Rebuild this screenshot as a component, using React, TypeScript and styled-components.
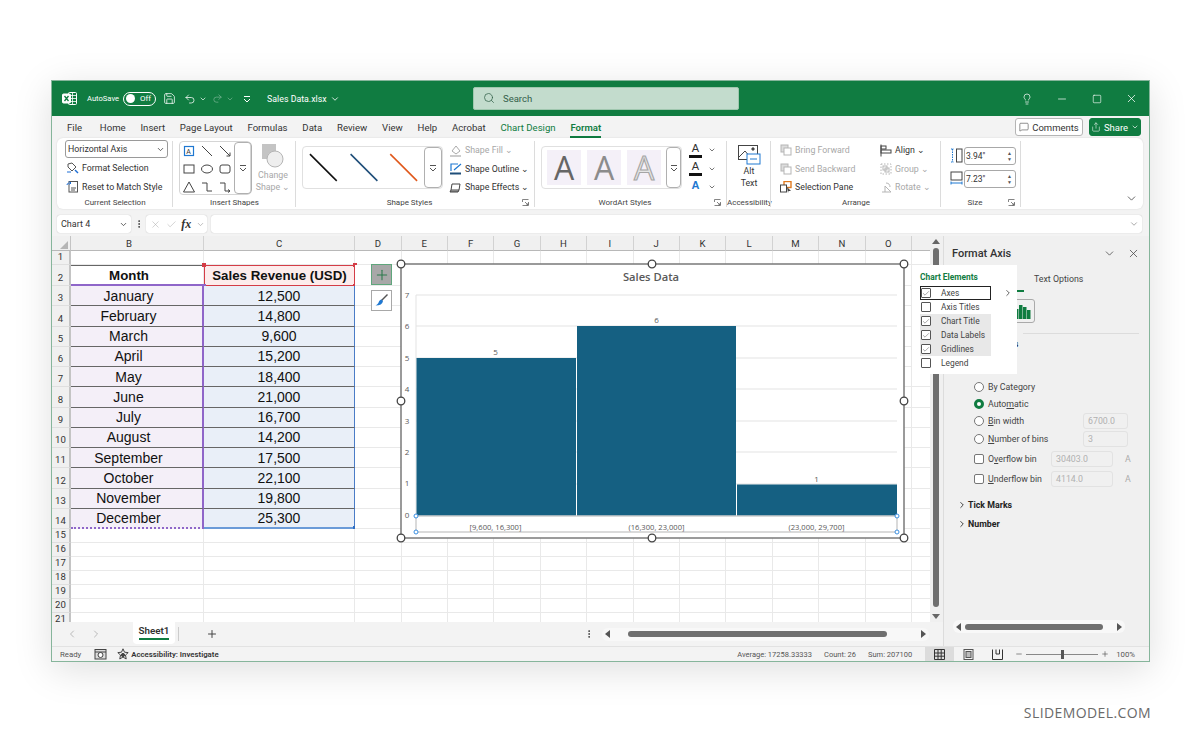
import React from 'react'
import styled, { createGlobalStyle } from 'styled-components'
import {
  Save, Undo2, Redo2, ChevronDown, ChevronRight, ChevronLeft, Search, Lightbulb, Minus, Square, X, Check,
  MessageSquare, Share, Plus, EllipsisVertical,
} from 'lucide-react'

const GlobalStyle = createGlobalStyle`
  html, body { margin: 0; padding: 0; background: #fff; }
  body { font-family: Roboto, "Open Sans", sans-serif; color: #333; }
  * { box-sizing: border-box; }
  #root { width: 1200px; height: 743px; overflow: hidden; }
`

const green = '#107c41'

const Page = styled.div`
  display: flex;
  flex-direction: column;
  width: 1200px;
  height: 743px;
  padding: 80px 49px 0 51px;
`

const Window = styled.div`
  display: flex;
  flex-direction: column;
  width: 1099px;
  height: 582px;
  flex-shrink: 0;
  border: 1px solid #86b59b;
  background: #f3f3f3;
  box-shadow: 0 8px 36px rgba(0, 0, 0, 0.13);
`

const Watermark = styled.div`
  margin-top: 42px;
  text-align: right;
  font-family: "Open Sans", sans-serif;
  font-size: 14px;
  line-height: 18px;
  letter-spacing: 0.4px;
  color: #6a6a6a;
`

/* title bar */
const TitleBar = styled.div`
  display: flex;
  align-items: center;
  height: 35px;
  flex-shrink: 0;
  background: ${green};
  color: #fff;
`

const TitleLeft = styled.div`
  display: flex;
  align-items: center;
  width: 421px;
  padding-left: 10px;
`

const TitleItem = styled.div<{ $ml?: number; $dim?: boolean }>`
  display: flex;
  align-items: center;
  margin-left: ${(p) => p.$ml ?? 0}px;
  opacity: ${(p) => (p.$dim ? 0.45 : 1)};
  font-size: 7.6px;
`

const FileName = styled(TitleItem)`
  font-size: 8.8px;
  gap: 3px;
`

const Toggle = styled.div`
  display: flex;
  align-items: center;
  justify-content: space-between;
  width: 33px;
  height: 14px;
  margin-left: 4px;
  padding: 0 4px 0 2px;
  border: 1px solid #fff;
  border-radius: 8px;
  font-size: 8px;
  &::before {
    content: '';
    width: 9px;
    height: 9px;
    border-radius: 50%;
    background: #fff;
  }
`

const SearchBox = styled.div`
  display: flex;
  align-items: center;
  gap: 8px;
  width: 266px;
  height: 23px;
  margin-top: -1px;
  padding-left: 9px;
  border: 1px solid #9fc7ae;
  border-radius: 2px;
  background: #c3dccd;
  color: #33604a;
  font-size: 9.5px;
`

const TitleRight = styled.div`
  display: flex;
  flex: 1;
  justify-content: flex-end;
`

const WindowButton = styled.div`
  display: flex;
  align-items: center;
  justify-content: center;
  width: 35px;
  height: 24px;
`

/* tabs */
const TabRow = styled.div`
  display: flex;
  align-items: center;
  height: 22px;
  flex-shrink: 0;
  padding: 0 8px 0 15px;
  gap: 14.8px;
`

const Tab = styled.div<{ $active?: boolean; $green?: boolean }>`
  position: relative;
  font-size: 9.6px;
  color: ${(p) => (p.$active || p.$green ? green : '#333')};
  font-weight: ${(p) => (p.$active ? 600 : 400)};
  &:first-child {
    margin-right: 3px;
  }
  &::after {
    content: '';
    display: ${(p) => (p.$active ? 'block' : 'none')};
    position: absolute;
    left: 0;
    right: 0;
    bottom: -5px;
    height: 2px;
    background: ${green};
  }
`

const TabActions = styled.div`
  display: flex;
  gap: 6px;
  margin-left: auto;
`

const CommentsButton = styled.div`
  display: flex;
  align-items: center;
  justify-content: center;
  gap: 3px;
  width: 68px;
  height: 18px;
  border: 1px solid #b5b5b5;
  border-radius: 3px;
  background: #fff;
  font-size: 9.5px;
`

const ShareButton = styled(CommentsButton)`
  width: 52px;
  border-color: ${green};
  background: ${green};
  color: #fff;
`

/* ribbon */
const Ribbon = styled.div`
  position: relative;
  display: flex;
  height: 71px;
  flex-shrink: 0;
  margin: 0 6px 0 5px;
  padding-top: 2px;
  border-radius: 6px;
  background: #fff;
  box-shadow: 0 0 2px rgba(0, 0, 0, 0.12);
`

const Group = styled.div<{ $w: number }>`
  position: relative;
  display: flex;
  flex-direction: column;
  width: ${(p) => p.$w}px;
  flex-shrink: 0;
  &::after {
    content: '';
    position: absolute;
    top: 1px;
    right: 0;
    bottom: 2px;
    width: 1px;
    background: #dcdcdc;
  }
`

const GroupBody = styled.div<{ $pl?: number }>`
  display: flex;
  height: 57px;
  padding-left: ${(p) => p.$pl ?? 0}px;
`

const GroupLabel = styled.div<{ $pr?: number }>`
  position: relative;
  height: 12px;
  padding-right: ${(p) => p.$pr ?? 0}px;
  line-height: 12px;
  text-align: center;
  font-size: 8px;
  color: #444;
`

const Launcher = styled.svg`
  position: absolute;
  right: 6px;
  top: 2px;
  width: 7px;
  height: 7px;
`

const CommandColumn = styled.div<{ $ml?: number; $w?: number; $pt?: number }>`
  display: flex;
  flex-direction: column;
  gap: 0;
  margin-left: ${(p) => p.$ml ?? 0}px;
  padding-top: ${(p) => p.$pt ?? 0}px;
  width: ${(p) => (p.$w ? `${p.$w}px` : 'auto')};
`

const Command = styled.div<{ $off?: boolean }>`
  display: flex;
  align-items: center;
  gap: 3px;
  height: 18.5px;
  white-space: nowrap;
  font-size: 8.8px;
  color: ${(p) => (p.$off ? '#a8a8a8' : '#333')};
`

const ComboBox = styled.div`
  display: flex;
  align-items: center;
  justify-content: space-between;
  width: 103px;
  height: 18px;
  padding: 0 2px 0 2px;
  margin-left: -1px;
  margin-bottom: 1px;
  border: 1px solid #9a9a9a;
  border-radius: 3px;
  font-size: 8.8px;
`

const ShapeGallery = styled.div`
  display: flex;
  width: 72px;
  height: 54px;
  margin: 1px 0 0 6px;
  border: 1px solid #d5d5d5;
  border-radius: 4px;
`

const ShapeGrid = styled.div`
  display: grid;
  grid-template-columns: repeat(3, 18px);
  grid-template-rows: repeat(3, 18px);
  justify-items: center;
  align-items: center;
`

const GalleryScroll = styled.div<{ $w: number }>`
  display: flex;
  align-items: center;
  justify-content: center;
  width: ${(p) => p.$w}px;
  margin-left: auto;
  border: 1px solid #b0b0b0;
  border-radius: 4px;
  flex-shrink: 0;
`

const ChangeShape = styled.div`
  display: flex;
  flex-direction: column;
  align-items: center;
  width: 40px;
  margin-left: 2px;
  padding-top: 3px;
  font-size: 8.8px;
  line-height: 12px;
  color: #a8a8a8;
  text-align: center;
`

const StyleGallery = styled.div<{ $w: number }>`
  display: flex;
  width: ${(p) => p.$w}px;
  height: 43px;
  margin: 6px 0 0 6px;
  border: 1px solid #e0e0e0;
  border-radius: 4px;
`

const WordTiles = styled.div`
  display: flex;
  gap: 6px;
  padding: 3px 0 0 5px;
`

const WordTile = styled.div<{ $tone: string; $outline?: boolean }>`
  display: flex;
  align-items: center;
  justify-content: center;
  width: 34px;
  height: 35px;
  background: #f4f0f8;
  font-family: "Open Sans", sans-serif;
  font-size: 32px;
  color: ${(p) => (p.$outline ? '#e6e6e6' : p.$tone)};
  -webkit-text-stroke: ${(p) => (p.$outline ? `1.1px ${p.$tone}` : '0')};
`

const FontRow = styled.div`
  display: flex;
  align-items: center;
  gap: 6px;
  height: 18.5px;
  color: #333;
`

const FontLetter = styled.div<{ $bar?: string; $color?: string }>`
  width: 13px;
  height: 15px;
  line-height: 11px;
  text-align: center;
  font-family: "Liberation Sans", sans-serif;
  font-size: 11px;
  color: ${(p) => p.$color ?? '#333'};
  font-weight: ${(p) => (p.$color ? 700 : 400)};
  border-bottom: 3px solid ${(p) => p.$bar ?? 'transparent'};
`

const AltText = styled.div`
  display: flex;
  flex-direction: column;
  align-items: center;
  width: 100%;
  padding-top: 5px;
  font-size: 8.8px;
  line-height: 12px;
`

const SizeRow = styled.div`
  display: flex;
  align-items: center;
  gap: 1px;
  height: 23px;
`

const SizeInput = styled.div`
  display: flex;
  align-items: center;
  justify-content: space-between;
  width: 52px;
  height: 18px;
  padding: 0 3px 0 1px;
  border: 1px solid #a8a8a8;
  border-radius: 3px;
  font-size: 8.5px;
`

const Spin = styled.div`
  display: flex;
  flex-direction: column;
  font-size: 5px;
  line-height: 6px;
  color: #555;
`

const RibbonCollapse = styled.div`
  position: absolute;
  right: 5px;
  top: 52px;
  color: #444;
`

/* formula bar */
const FormulaBar = styled.div`
  display: flex;
  align-items: flex-start;
  height: 27px;
  flex-shrink: 0;
  padding: 6px 7px 0 5px;
  color: #666;
`

const NameBox = styled.div`
  display: flex;
  align-items: center;
  justify-content: space-between;
  width: 74px;
  height: 18px;
  padding: 0 3px 0 4px;
  border-radius: 3px;
  background: #fff;
  box-shadow: 0 0 1px rgba(0, 0, 0, 0.3);
  color: #333;
  font-size: 9px;
`

const FormulaDots = styled.div`
  display: flex;
  align-items: center;
  justify-content: center;
  width: 15px;
  height: 18px;
  color: #333;
`

const FormulaTools = styled(NameBox)`
  width: 61px;
  padding: 0 2px 0 4px;
  color: #aaa;
`

const FxLabel = styled.span`
  font-family: "Liberation Serif", serif;
  font-style: italic;
  font-weight: 700;
  font-size: 12px;
  color: #333;
`

const FormulaInput = styled(NameBox)`
  flex: 1;
  margin-left: 4px;
  justify-content: flex-end;
  color: #999;
`

/* main body */
const Body = styled.div`
  position: relative;
  display: flex;
  flex: 1;
  min-height: 0;
`

const SheetColumn = styled.div`
  display: flex;
  flex-direction: column;
  width: 891px;
  flex-shrink: 0;
`

const SheetArea = styled.div`
  display: flex;
  height: 386px;
  flex-shrink: 0;
`

const GridWrap = styled.div`
  position: relative;
  flex: 1;
  min-width: 0;
  overflow: hidden;
  background: #fff;
`

const Row = styled.div<{ $h: number }>`
  display: grid;
  grid-template-columns: 19px 133px 151px 46.6px repeat(12, 46.4px);
  height: ${(p) => p.$h}px;
`

const HeaderCell = styled.div<{ $pr?: number }>`
  display: flex;
  align-items: center;
  justify-content: center;
  padding-right: ${(p) => p.$pr ?? 0}px;
  background: #f0f0f0;
  border-right: 1px solid #d2d2d2;
  border-bottom: 1px solid #b8b8b8;
  font-size: 9.6px;
  color: #333;
`

const Corner = styled(HeaderCell)`
  border-right: 1.5px solid #c4c4c4;
  &::before {
    content: '';
    margin: 3px 0 0 5px;
    border-style: solid;
    border-width: 0 0 8px 8px;
    border-color: transparent transparent #b5b5b5 transparent;
  }
`

const RowNumber = styled.div`
  display: flex;
  align-items: flex-end;
  justify-content: center;
  padding-bottom: 1px;
  background: #f0f0f0;
  border-right: 2px solid #c4c4c4;
  border-bottom: 1px solid #dfdfdf;
  font-size: 9.6px;
  line-height: 12px;
  color: #333;
`

type CellKind = 'plain' | 'month' | 'value' | 'monthHead' | 'valueHead'

const cellBg: Record<CellKind, string> = {
  plain: '#fff',
  month: '#f4eff8',
  value: '#e9eff8',
  monthHead: '#fff',
  valueHead: '#fdecec',
}

const Cell = styled.div<{ $kind?: CellKind; $last?: boolean }>`
  position: relative;
  display: flex;
  align-items: center;
  justify-content: center;
  padding-right: ${(p) => (p.$kind === 'month' || p.$kind === 'monthHead' ? 16 : 0)}px;
  background: ${(p) => cellBg[p.$kind ?? 'plain']};
  border-right: ${(p) => {
    if (p.$kind === 'month') return '2px solid #8f66c9'
    if (p.$kind === 'value') return '1.5px solid #4a7cc7'
    if (p.$kind === 'valueHead') return '1.5px solid #d43c46'
    return '1px solid #e9e9e9'
  }};
  border-bottom: ${(p) => {
    if (p.$kind === 'month') return p.$last ? '2px dotted #8f66c9' : '1.5px solid #666'
    if (p.$kind === 'value') return p.$last ? '2px solid #6b9bd8' : '1.5px solid #666'
    if (p.$kind === 'monthHead') return '2px solid #8f66c9'
    if (p.$kind === 'valueHead') return '1.5px solid #d43c46'
    return '1px solid #e9e9e9'
  }};
  ${(p) => (p.$kind === 'monthHead' ? 'border-top: 1.5px solid #666;' : '')}
  ${(p) => (p.$kind === 'valueHead' ? 'border-top: 1.5px solid #d43c46; border-left: 1.5px solid #d43c46;' : '')}
  font-family: "Liberation Sans", sans-serif;
  font-size: ${(p) => (p.$kind === 'monthHead' || p.$kind === 'valueHead' ? 13.3 : 14)}px;
  font-weight: ${(p) => (p.$kind === 'monthHead' || p.$kind === 'valueHead' ? 700 : 400)};
  color: #111;
  white-space: nowrap;
`

const CornerDot = styled.span<{ $x: 'left' | 'right'; $y: 'top' | 'bottom'; $color: string }>`
  position: absolute;
  ${(p) => p.$x}: -3px;
  ${(p) => p.$y}: -3px;
  width: 4px;
  height: 4px;
  background: ${(p) => p.$color};
`

const ChartButton = styled.div<{ $top: number; $active?: boolean }>`
  position: absolute;
  left: 319px;
  top: ${(p) => p.$top}px;
  display: flex;
  align-items: center;
  justify-content: center;
  width: 21px;
  height: 21px;
  border: 1px solid ${(p) => (p.$active ? '#5fa67c' : '#a8a8a8')};
  background: ${(p) => (p.$active ? '#a8a8a8' : '#fff')};
  color: #2c7a4c;
  z-index: 2;
`

const ChartCanvas = styled.svg`
  position: absolute;
  left: 349px;
  top: 28px;
  width: 503px;
  height: 274px;
  overflow: visible;
  z-index: 2;
  text {
    font-family: "Open Sans", sans-serif;
    fill: #595959;
  }
`

const VScroll = styled.div`
  position: relative;
  width: 13px;
  flex-shrink: 0;
  background: #f0f0f0;
`

const VThumb = styled.div`
  position: absolute;
  left: 3px;
  top: 12px;
  bottom: 15px;
  width: 6px;
  border-radius: 3px;
  background: #6f6f6f;
`

const VArrow = styled.div<{ $down?: boolean }>`
  position: absolute;
  left: 2px;
  ${(p) => (p.$down ? 'bottom: 3px;' : 'top: 3px;')}
  border-style: solid;
  border-width: ${(p) => (p.$down ? '5px 4px 0 4px' : '0 4px 5px 4px')};
  border-color: ${(p) => (p.$down ? '#666 transparent transparent transparent' : 'transparent transparent #666 transparent')};
`

/* sheet tabs */
const SheetTabs = styled.div`
  display: flex;
  align-items: center;
  flex: 1;
  padding-left: 14px;
  color: #999;
`

const NavArrows = styled.div`
  display: flex;
  gap: 12px;
  width: 67px;
`

const SheetTab = styled.div`
  position: relative;
  align-self: flex-start;
  width: 42px;
  height: 22px;
  padding-top: 3px;
  border-radius: 0 0 4px 4px;
  background: #fff;
  text-align: center;
  font-size: 9.8px;
  font-weight: 600;
  color: #333;
  &::after {
    content: '';
    position: absolute;
    left: 6px;
    right: 6px;
    bottom: 4px;
    height: 2px;
    background: ${green};
  }
`

const TabSeparator = styled.div`
  width: 1px;
  height: 14px;
  margin: 0 27px 0 3px;
  background: #ccc;
`

const AddSheet = styled.div`
  color: #444;
  display: flex;
`

const HScrollDots = styled.div`
  margin-left: 366px;
  display: flex;
  color: #333;
`

const ScrollTrack = styled.div<{ $w: number; $ml: number }>`
  display: flex;
  align-items: center;
  width: ${(p) => p.$w}px;
  height: 13px;
  margin-left: ${(p) => p.$ml}px;
  padding: 0 3px;
  border-radius: 6px;
  background: #f8f8f8;
`

const ScrollArrow = styled.div<{ $right?: boolean }>`
  flex-shrink: 0;
  border-style: solid;
  border-width: 4px 0 4px 5px;
  border-color: transparent transparent transparent #555;
  transform: ${(p) => (p.$right ? 'none' : 'rotate(180deg)')};
`

const ScrollThumb = styled.div<{ $ml: number; $w: number }>`
  width: ${(p) => p.$w}px;
  height: 6px;
  margin-left: ${(p) => p.$ml}px;
  margin-right: auto;
  border-radius: 3px;
  background: #6f6f6f;
`

/* side panel */
const Panel = styled.div`
  display: flex;
  flex-direction: column;
  flex: 1;
  background: #f0f0f0;
  border-left: 1px solid #dcdcdc;
  font-size: 8.8px;
`

const PanelHead = styled.div`
  display: flex;
  align-items: center;
  height: 34px;
  padding: 0 9px 0 8px;
  font-size: 11px;
  font-weight: 500;
  color: #333;
`

const PanelTools = styled.div`
  display: flex;
  gap: 11px;
  margin-left: auto;
  color: #444;
`

const TextOptions = styled.div`
  height: 20px;
  line-height: 19px;
  margin-left: 90px;
  color: #444;
`

const PanelUnderline = styled.div`
  width: 70px;
  height: 2px;
  margin-left: 10px;
  background: ${green};
`

const IconBox = styled.div`
  display: flex;
  align-items: center;
  justify-content: center;
  width: 26px;
  height: 24px;
  margin: 7px 0 0 65px;
  border: 1px solid #aaa;
  border-radius: 3px;
  color: ${green};
`

const PanelDivider = styled.div`
  height: 1px;
  margin: 10px 10px 0 79px;
  background: #dcdcdc;
`

const PanelSectionTitle = styled.div`
  height: 22px;
  margin-left: 57px;
  line-height: 21px;
  font-weight: 700;
  color: #222;
`

const OptionList = styled.div`
  display: flex;
  flex-direction: column;
  padding: 22px 0 0 30px;
`

const OptionRow = styled.div<{ $h: number }>`
  display: flex;
  align-items: center;
  height: ${(p) => p.$h}px;
  color: #444;
`

const Radio = styled.span<{ $on?: boolean }>`
  width: 10px;
  height: 10px;
  flex-shrink: 0;
  margin-right: 4px;
  border-radius: 50%;
  border: ${(p) => (p.$on ? `3px solid ${green}` : '1px solid #777')};
  background: #fff;
`

const CheckBox = styled.span`
  width: 10px;
  height: 10px;
  flex-shrink: 0;
  margin-right: 4px;
  border: 1px solid #777;
  border-radius: 2px;
  background: #fff;
`

const OptionLabel = styled.span<{ $w: number }>`
  width: ${(p) => p.$w}px;
  flex-shrink: 0;
`

const DisabledInput = styled.div<{ $w: number }>`
  display: flex;
  align-items: center;
  width: ${(p) => p.$w}px;
  height: 16px;
  padding-left: 4px;
  flex-shrink: 0;
  border: 1px solid #e2e2e2;
  border-radius: 3px;
  color: #b0b0b0;
`

const AutoMark = styled.span`
  margin-left: 12px;
  color: #aaa;
`

const SectionRow = styled.div<{ $mt: number }>`
  display: flex;
  align-items: center;
  gap: 1px;
  margin: ${(p) => p.$mt}px 0 0 13px;
  height: 12px;
  font-weight: 700;
  color: #222;
`

const PanelScroll = styled.div`
  margin: auto 0 13px 9px;
  display: flex;
`

/* chart elements popup */
const ElementsPopup = styled.div`
  position: absolute;
  left: 860px;
  top: 29px;
  width: 105px;
  height: 109px;
  padding: 5px 8px;
  background: #fff;
  z-index: 3;
  font-size: 8.4px;
`

const PopupTitle = styled.div`
  height: 16px;
  line-height: 14px;
  font-weight: 700;
  color: ${green};
`

const PopupRow = styled.div<{ $hl?: boolean; $focus?: boolean }>`
  position: relative;
  display: flex;
  align-items: center;
  gap: 10px;
  width: 71px;
  height: 14px;
  padding-left: 1px;
  background: ${(p) => (p.$hl ? '#e8e8e8' : '#fff')};
  color: #444;
  ${(p) => (p.$focus ? 'outline: 1.5px solid #222; outline-offset: -1.5px;' : '')}
`

const PopupCheck = styled.span`
  display: flex;
  align-items: center;
  justify-content: center;
  width: 10px;
  height: 10px;
  border: 1px solid #555;
  border-radius: 1px;
  background: #fff;
  color: #444;
`

const PopupArrow = styled.span`
  position: absolute;
  left: 83px;
  top: 2px;
  display: flex;
  color: #444;
`

/* status bar */
const StatusBar = styled.div`
  display: flex;
  align-items: center;
  height: 15px;
  flex-shrink: 0;
  padding: 0 14px 0 8px;
  border-top: 1px solid #e2e2e2;
  font-size: 7.8px;
  color: #555;
`

const StatusIcon = styled.span<{ $ml: number }>`
  display: flex;
  margin-left: ${(p) => p.$ml}px;
  color: #444;
`

const AccessText = styled.span`
  margin-left: 2px;
  font-weight: 600;
  color: #333;
`

const StatusRight = styled.div`
  display: flex;
  align-items: center;
  margin-left: auto;
  height: 100%;
`

const StatusStat = styled.span`
  margin-right: 12px;
  font-size: 7.5px;
`

const StatsEnd = styled(StatusStat)`
  margin-right: 13px;
`

const ViewButton = styled.div<{ $on?: boolean }>`
  display: flex;
  align-items: center;
  justify-content: center;
  width: 29px;
  height: 100%;
  background: ${(p) => (p.$on ? '#dcdcdc' : 'transparent')};
`

const ZoomBar = styled.div`
  display: flex;
  align-items: center;
  margin-left: 3px;
`

const ZoomTrack = styled.div`
  position: relative;
  width: 72px;
  height: 1px;
  margin: 0 3px;
  background: #888;
  &::after {
    content: '';
    position: absolute;
    left: 35px;
    top: -4px;
    width: 3px;
    height: 9px;
    background: #555;
  }
`

const ZoomLabel = styled.span`
  margin-left: 7px;
`

const Launch = () => (
  <Launcher viewBox="0 0 7 7" fill="none" stroke="#666" strokeWidth="0.8">
    <path d="M0.5 3V0.5H6.5M0.5 6.5H6.5V3M3 3L6 6M4 6H6V4" />
  </Launcher>
)

const FormatSelectionIcon = () => (
  <svg width="13" height="13" viewBox="0 0 13 13" fill="none" strokeWidth="1">
    <path d="M2 2L6 1L10 5L6 9L2 5Z" stroke="#555" />
    <path d="M9 8L12 11" stroke="#1f6fd6" strokeWidth="1.4" />
    <path d="M1 10H5" stroke="#1f6fd6" />
  </svg>
)

const ResetStyleIcon = () => (
  <svg width="13" height="13" viewBox="0 0 13 13" fill="none" stroke="#555">
    <rect x="3" y="1.5" width="8.5" height="10.5" />
    <path d="M1 5C1 3 3 3 5 3M5 3L3.5 1.5M5 3L3.5 4.5" stroke="#1f6fd6" />
    <path d="M5 8H10M5 10H9" />
  </svg>
)

const shapeDrawings: React.ReactNode[] = [
  <g key="t"><rect x="2.5" y="2.5" width="9" height="9" fill="none" stroke="#1f78d1" strokeWidth="1.2" /><text x="4.3" y="10" fontSize="7" fill="#333">A</text></g>,
  <path key="l" d="M2 2L12 12" stroke="#444" />,
  <path key="a" d="M2 2L12 12M12 12V8.5M12 12H8.5" stroke="#444" fill="none" />,
  <rect key="r" x="2" y="3" width="10" height="8" fill="none" stroke="#444" />,
  <ellipse key="o" cx="7" cy="7" rx="5.5" ry="4" fill="none" stroke="#444" />,
  <rect key="rr" x="2" y="3" width="10" height="8" rx="2" fill="none" stroke="#444" />,
  <path key="tr" d="M7 2L12.5 12H1.5Z" fill="none" stroke="#444" />,
  <path key="c" d="M2 3H7V11H12" fill="none" stroke="#444" />,
  <path key="ca" d="M2 3H7V11H12M12 11L10 9.5M12 11L10 12.5" fill="none" stroke="#444" />,
]

const ExpandGlyph = ({ color = '#555' }: { color?: string }) => (
  <svg width="8" height="8" viewBox="0 0 8 8" fill="none" stroke={color}>
    <path d="M1 1.5H7M1 4L4 7L7 4" />
  </svg>
)

const ChangeShapeIcon = () => (
  <svg width="26" height="26" viewBox="0 0 26 26">
    <rect x="2" y="1" width="14" height="15" fill="#c4c4c4" />
    <circle cx="15" cy="16" r="8" fill="#eee" stroke="#b5b5b5" />
  </svg>
)

const FillIcon = () => (
  <svg width="13" height="13" viewBox="0 0 13 13" fill="none" stroke="#aaa">
    <path d="M3 7L7 2L11 7L7 10Z" />
    <path d="M1 12H12" stroke="#bbb" strokeWidth="1.5" />
  </svg>
)

const OutlineIcon = () => (
  <svg width="13" height="13" viewBox="0 0 13 13" fill="none">
    <path d="M2 9V2H9M12 2L5 8" stroke="#1f78d1" strokeWidth="1.2" />
    <path d="M1 11.5H12" stroke="#1f4e79" strokeWidth="2" />
  </svg>
)

const EffectsIcon = () => (
  <svg width="13" height="13" viewBox="0 0 13 13" fill="none" stroke="#444">
    <path d="M3 3H11L10 9H2Z" />
    <path d="M2 9L1 11H9L10 9" fill="#888" />
  </svg>
)

const AltIcon = () => (
  <svg width="23" height="20" viewBox="0 0 23 20" fill="none" stroke="#444">
    <rect x="0.5" y="0.5" width="19" height="14" />
    <path d="M1 12L7 6L13 13" />
    <circle cx="15" cy="4" r="1.2" fill="#444" />
    <rect x="9" y="9" width="13" height="10" fill="#fff" stroke="#1f78d1" />
    <path d="M12 14H19" stroke="#1f78d1" />
  </svg>
)

const StackIcon = ({ off }: { off?: boolean }) => (
  <svg width="12" height="12" viewBox="0 0 12 12" fill="none" stroke={off ? '#b5b5b5' : '#444'}>
    <rect x="1" y="1" width="7" height="7" fill={off ? '#ddd' : '#fff'} />
    <rect x="4" y="4" width="7" height="7" fill="#fff" />
  </svg>
)

const SelectionPaneIcon = () => (
  <svg width="12" height="12" viewBox="0 0 12 12" fill="none">
    <rect x="4" y="0.5" width="7" height="6" fill="#fff" stroke="#e07a1f" strokeWidth="1.4" />
    <rect x="0.5" y="4" width="6" height="7" fill="#fff" stroke="#444" />
    <path d="M7 6L11 10L8.5 10L8 12Z" fill="#444" />
  </svg>
)

const AlignIcon = () => (
  <svg width="12" height="13" viewBox="0 0 12 13" fill="none" stroke="#444">
    <path d="M1 0.5V12.5" />
    <rect x="1" y="2" width="5" height="3" />
    <rect x="1" y="6" width="10" height="3" />
  </svg>
)

const GroupIcon = () => (
  <svg width="12" height="12" viewBox="0 0 12 12" fill="none" stroke="#b5b5b5">
    <path d="M1 1H11V11H1Z" strokeDasharray="1.5 1.5" />
    <rect x="3" y="3" width="4" height="4" />
    <rect x="5" y="5" width="4" height="4" />
  </svg>
)

const RotateIcon = () => (
  <svg width="12" height="12" viewBox="0 0 12 12" fill="none" stroke="#b5b5b5">
    <path d="M2 11H11L5 5V11M6 2C9 2 10 4 10 6" />
  </svg>
)

const HeightIcon = () => (
  <svg width="13" height="15" viewBox="0 0 13 15" fill="none">
    <path d="M2.5 1V14M1 1H4M1 14H4" stroke="#1f78d1" strokeDasharray="1.5 1" />
    <rect x="6.5" y="1" width="5.5" height="13" stroke="#444" />
  </svg>
)

const WidthIcon = () => (
  <svg width="13" height="15" viewBox="0 0 13 15" fill="none">
    <rect x="1" y="1" width="11" height="8" stroke="#444" />
    <path d="M1 12H12M1 10.5V13.5M12 10.5V13.5" stroke="#1f78d1" />
  </svg>
)

const ExcelLogo = () => (
  <svg width="15" height="15" viewBox="0 0 15 15" fill="none" stroke="#fff">
    <rect x="6.5" y="1.5" width="8" height="12" rx="1" />
    <path d="M6.5 4.5H14.5M6.5 7.5H14.5M6.5 10.5H14.5M10.5 1.5V13.5" strokeWidth="0.8" />
    <rect x="0.5" y="3" width="8" height="9" rx="1" fill="#fff" />
    <path d="M2.5 5L6.5 10M6.5 5L2.5 10" stroke={green} strokeWidth="1.3" />
  </svg>
)

const BrushIcon = () => (
  <svg width="15" height="15" viewBox="0 0 15 15" fill="none">
    <path d="M13.5 1.5L7 8" stroke="#555" strokeWidth="1.4" />
    <path d="M7.5 6.5L9 8C8.5 11 6 12.5 1.5 12.5C4 11.5 4.5 9.5 5 8.5C5.5 7.5 6.5 6.8 7.5 6.5Z" fill="#1f78d1" />
  </svg>
)

const BarsIcon = () => (
  <svg width="17" height="17" viewBox="0 0 17 17" fill="currentColor">
    <rect x="1" y="6" width="3.5" height="10" />
    <rect x="5" y="2" width="3.5" height="14" />
    <rect x="9" y="4" width="3.5" height="12" />
    <rect x="13" y="7" width="3.5" height="9" />
  </svg>
)

const MacroIcon = () => (
  <svg width="13" height="12" viewBox="0 0 13 12" fill="none" stroke="#444">
    <rect x="1" y="1.5" width="11" height="9.5" fill="#ddd" />
    <circle cx="6.5" cy="7" r="2.5" fill="#fff" />
    <path d="M1 4H12" />
  </svg>
)

const AccessIcon = () => (
  <svg width="12" height="12" viewBox="0 0 12 12" fill="none" stroke="#444">
    <path d="M6 0.8L7.5 4.2L11.2 4.6L8.5 7L9.2 11L6 9L2.8 11L3.5 7L0.8 4.6L4.5 4.2Z" />
    <circle cx="6" cy="7" r="1.6" fill="#444" />
  </svg>
)

const NormalViewIcon = () => (
  <svg width="11" height="11" viewBox="0 0 11 11" fill="none" stroke="#333">
    <path d="M0.5 0.5H10.5V10.5H0.5ZM0.5 4H10.5M0.5 7.2H10.5M4 0.5V10.5M7.2 0.5V10.5" />
  </svg>
)

const PageViewIcon = () => (
  <svg width="11" height="11" viewBox="0 0 11 11" fill="none" stroke="#555">
    <rect x="1" y="0.5" width="9" height="10" />
    <rect x="3" y="2.5" width="5" height="6" fill="#bbb" />
  </svg>
)

const BreakViewIcon = () => (
  <svg width="11" height="11" viewBox="0 0 11 11" fill="none" stroke="#333">
    <path d="M0.5 0.5V10.5H10.5V0.5M4 0.5V5H7.5V0.5" />
  </svg>
)

const gridYs = [295, 326, 358, 389, 421, 452, 484]
const chartBars = [
  { x: 416.5, w: 159.5, y: 358, label: '5', cx: 495.5, range: '[9,600, 16,300]' },
  { x: 577, w: 159, y: 326, label: '6', cx: 656.5, range: '(16,300, 23,000]' },
  { x: 737, w: 160, y: 484.5, label: '1', cx: 816.5, range: '(23,000, 29,700]' },
]
const frameHandles = [
  [401, 264], [652, 264], [904, 264], [401, 401], [904, 401], [401, 538], [652, 538], [904, 538],
]
const axisHandles = [[416, 516], [897, 516], [416, 532], [897, 532]]

const SalesChart = () => (
  <ChartCanvas viewBox="401 264 503 274">
    <rect x="401" y="264" width="503" height="274" fill="#fff" stroke="#7a7a7a" strokeWidth="1.5" />
    <text x="651" y="281" textAnchor="middle" fontSize="11.2" fontWeight="600">Sales Data</text>
    {gridYs.map((y) => (
      <line key={y} x1="416" x2="897" y1={y} y2={y} stroke="#e3e3e3" />
    ))}
    <line x1="416" x2="416" y1="295" y2="515" stroke="#e3e3e3" />
    {[7, 6, 5, 4, 3, 2, 1, 0].map((n, i) => (
      <text key={n} x="407" y={298 + i * 31.4} textAnchor="middle" fontSize="8">{n}</text>
    ))}
    {chartBars.map((b) => (
      <g key={b.cx}>
        <rect x={b.x} y={b.y} width={b.w} height={515.5 - b.y} fill="#156082" />
        <text x={b.cx} y={b.y - 3} textAnchor="middle" fontSize="8">{b.label}</text>
        <text x={b.cx} y="529.5" textAnchor="middle" fontSize="7.6">{b.range}</text>
      </g>
    ))}
    <rect x="416" y="516" width="481" height="16" fill="none" stroke="#b5b5b5" />
    {axisHandles.map(([x, y]) => (
      <circle key={`${x}-${y}`} cx={x} cy={y} r="2" fill="#fff" stroke="#3a8ee0" />
    ))}
    {frameHandles.map(([x, y]) => (
      <circle key={`${x}-${y}`} cx={x} cy={y} r="3.8" fill="#fff" stroke="#444" strokeWidth="1.3" />
    ))}
  </ChartCanvas>
)

const months: [string, string][] = [
  ['January', '12,500'], ['February', '14,800'], ['March', '9,600'], ['April', '15,200'],
  ['May', '18,400'], ['June', '21,000'], ['July', '16,700'], ['August', '14,200'],
  ['September', '17,500'], ['October', '22,100'], ['November', '19,800'], ['December', '25,300'],
]
const columns = ['B', 'C', 'D', 'E', 'F', 'G', 'H', 'I', 'J', 'K', 'L', 'M', 'N', 'O', 'P']
const emptyCols = columns.slice(2)

const BlankCells = () => (
  <>
    {emptyCols.map((c) => <Cell key={c} />)}
  </>
)

const Sheet = () => (
  <GridWrap>
    <Row $h={15}>
      <Corner />
      {columns.map((c) => <HeaderCell key={c} $pr={c === 'B' ? 16 : 0}>{c}</HeaderCell>)}
    </Row>
    <Row $h={14}>
      <RowNumber>1</RowNumber>
      <Cell />
      <Cell />
      <BlankCells />
    </Row>
    <Row $h={21}>
      <RowNumber>2</RowNumber>
      <Cell $kind="monthHead">Month</Cell>
      <Cell $kind="valueHead">
        Sales Revenue (USD)
        <CornerDot $x="left" $y="top" $color="#d43c46" />
        <CornerDot $x="right" $y="top" $color="#d43c46" />
        <CornerDot $x="left" $y="bottom" $color="#8f66c9" />
        <CornerDot $x="right" $y="bottom" $color="#d43c46" />
      </Cell>
      <BlankCells />
    </Row>
    {months.map(([m, v], i) => (
      <Row key={m} $h={20.25}>
        <RowNumber>{i + 3}</RowNumber>
        <Cell $kind="month" $last={i === 11}>{m}</Cell>
        <Cell $kind="value" $last={i === 11}>
          {v}
          {i === 11 && <CornerDot $x="right" $y="bottom" $color="#2f6fc4" />}
        </Cell>
        <BlankCells />
      </Row>
    ))}
    {[15, 16, 17, 18, 19, 20, 21].map((n) => (
      <Row key={n} $h={14}>
        <RowNumber>{n}</RowNumber>
        <Cell />
        <Cell />
        <BlankCells />
      </Row>
    ))}
    <ChartButton $top={28} $active><Plus size={16} strokeWidth={1.6} /></ChartButton>
    <ChartButton $top={54}><BrushIcon /></ChartButton>
    <SalesChart />
  </GridWrap>
)

const elementRows = [
  { name: 'Axes', on: true, focus: true },
  { name: 'Axis Titles', on: false },
  { name: 'Chart Title', on: true, hl: true },
  { name: 'Data Labels', on: true, hl: true },
  { name: 'Gridlines', on: true, hl: true },
  { name: 'Legend', on: false },
]

const ChartElements = () => (
  <ElementsPopup>
    <PopupTitle>Chart Elements</PopupTitle>
    {elementRows.map((r) => (
      <PopupRow key={r.name} $hl={r.hl} $focus={r.focus}>
        <PopupCheck>{r.on && <Check size={9} strokeWidth={1.4} />}</PopupCheck>
        {r.name}
        {r.focus && <PopupArrow><ChevronRight size={10} /></PopupArrow>}
      </PopupRow>
    ))}
  </ElementsPopup>
)

const FormatPanel = () => (
  <Panel>
    <PanelHead>
      Format Axis
      <PanelTools>
        <ChevronDown size={13} strokeWidth={1.4} />
        <X size={13} strokeWidth={1.4} />
      </PanelTools>
    </PanelHead>
    <TextOptions>Text Options</TextOptions>
    <PanelUnderline />
    <IconBox><BarsIcon /></IconBox>
    <PanelDivider />
    <PanelSectionTitle>Bins</PanelSectionTitle>
    <OptionList>
      <OptionRow $h={17}><Radio />By Category</OptionRow>
      <OptionRow $h={17}><Radio $on />Auto<u>m</u>atic</OptionRow>
      <OptionRow $h={18}>
        <Radio /><OptionLabel $w={95}><u>B</u>in width</OptionLabel>
        <DisabledInput $w={45}>6700.0</DisabledInput>
      </OptionRow>
      <OptionRow $h={18}>
        <Radio /><OptionLabel $w={95}><u>N</u>umber of bins</OptionLabel>
        <DisabledInput $w={45}>3</DisabledInput>
      </OptionRow>
      <OptionRow $h={21}>
        <CheckBox /><OptionLabel $w={63}>O<u>v</u>erflow bin</OptionLabel>
        <DisabledInput $w={62}>30403.0</DisabledInput>
        <AutoMark>A</AutoMark>
      </OptionRow>
      <OptionRow $h={20}>
        <CheckBox /><OptionLabel $w={63}><u>U</u>nderflow bin</OptionLabel>
        <DisabledInput $w={62}>4114.0</DisabledInput>
        <AutoMark>A</AutoMark>
      </OptionRow>
    </OptionList>
    <SectionRow $mt={10}><ChevronRight size={10} strokeWidth={2} />Tick Marks</SectionRow>
    <SectionRow $mt={7}><ChevronRight size={10} strokeWidth={2} />Number</SectionRow>
    <PanelScroll>
      <ScrollTrack $w={172} $ml={0}>
        <ScrollArrow />
        <ScrollThumb $ml={4} $w={138} />
        <ScrollArrow $right />
      </ScrollTrack>
    </PanelScroll>
  </Panel>
)

const RibbonBar = () => (
  <Ribbon>
    <Group $w={116}>
      <GroupBody $pl={9}>
        <CommandColumn>
          <ComboBox>Horizontal Axis<ChevronDown size={9} /></ComboBox>
          <Command><FormatSelectionIcon />Format Selection</Command>
          <Command><ResetStyleIcon />Reset to Match Style</Command>
        </CommandColumn>
      </GroupBody>
      <GroupLabel>Current Selection</GroupLabel>
    </Group>
    <Group $w={123}>
      <GroupBody>
        <ShapeGallery>
          <ShapeGrid>
            {shapeDrawings.map((d, i) => (
              <svg key={i} width="14" height="14" viewBox="0 0 14 14">{d}</svg>
            ))}
          </ShapeGrid>
          <GalleryScroll $w={18}><ExpandGlyph /></GalleryScroll>
        </ShapeGallery>
        <ChangeShape>
          <ChangeShapeIcon />
          Change
          <span>Shape ⌄</span>
        </ChangeShape>
      </GroupBody>
      <GroupLabel>Insert Shapes</GroupLabel>
    </Group>
    <Group $w={239}>
      <GroupBody>
        <StyleGallery $w={141}>
          <svg width="122" height="41" viewBox="0 0 122 41">
            <path d="M7 7L34 34" stroke="#111" strokeWidth="1.6" />
            <path d="M48 7L75 34" stroke="#1f4e79" strokeWidth="1.6" />
            <path d="M88 7L115 34" stroke="#e0591c" strokeWidth="1.6" />
          </svg>
          <GalleryScroll $w={18}><ExpandGlyph /></GalleryScroll>
        </StyleGallery>
        <CommandColumn $ml={6} $pt={1}>
          <Command $off><FillIcon />Shape Fill ⌄</Command>
          <Command><OutlineIcon />Shape Outline ⌄</Command>
          <Command><EffectsIcon />Shape Effects ⌄</Command>
        </CommandColumn>
      </GroupBody>
      <GroupLabel $pr={12}>Shape Styles<Launch /></GroupLabel>
    </Group>
    <Group $w={192}>
      <GroupBody>
        <StyleGallery $w={141}>
          <WordTiles>
            <WordTile $tone="#666">A</WordTile>
            <WordTile $tone="#8c8c8c">A</WordTile>
            <WordTile $tone="#a5a5a5" $outline>A</WordTile>
          </WordTiles>
          <GalleryScroll $w={15}><ExpandGlyph /></GalleryScroll>
        </StyleGallery>
        <CommandColumn $ml={7} $pt={1}>
          <FontRow><FontLetter $bar="#111">A</FontLetter><ChevronDown size={8} /></FontRow>
          <FontRow><FontLetter $bar="#111">A</FontLetter><ChevronDown size={8} /></FontRow>
          <FontRow><FontLetter $color="#1f78d1">A</FontLetter><ChevronDown size={8} /></FontRow>
        </CommandColumn>
      </GroupBody>
      <GroupLabel $pr={12}>WordArt Styles<Launch /></GroupLabel>
    </Group>
    <Group $w={44}>
      <GroupBody>
        <AltText>
          <AltIcon />
          Alt
          <span>Text</span>
        </AltText>
      </GroupBody>
      <GroupLabel>Accessibility</GroupLabel>
    </Group>
    <Group $w={170}>
      <GroupBody>
        <CommandColumn $ml={9} $w={100} $pt={1}>
          <Command $off><StackIcon off />Bring Forward</Command>
          <Command $off><StackIcon off />Send Backward</Command>
          <Command><SelectionPaneIcon />Selection Pane</Command>
        </CommandColumn>
        <CommandColumn $pt={1}>
          <Command><AlignIcon />Align ⌄</Command>
          <Command $off><GroupIcon />Group ⌄</Command>
          <Command $off><RotateIcon />Rotate ⌄</Command>
        </CommandColumn>
      </GroupBody>
      <GroupLabel>Arrange</GroupLabel>
    </Group>
    <Group $w={80}>
      <GroupBody $pl={9}>
        <CommandColumn $pt={4}>
          <SizeRow>
            <HeightIcon />
            <SizeInput>3.94"<Spin><span>▲</span><span>▼</span></Spin></SizeInput>
          </SizeRow>
          <SizeRow>
            <WidthIcon />
            <SizeInput>7.23"<Spin><span>▲</span><span>▼</span></Spin></SizeInput>
          </SizeRow>
        </CommandColumn>
      </GroupBody>
      <GroupLabel $pr={12}>Size<Launch /></GroupLabel>
    </Group>
    <RibbonCollapse><ChevronDown size={13} strokeWidth={1.5} /></RibbonCollapse>
  </Ribbon>
)

export default function App() {
  return (
    <Page>
      <GlobalStyle />
      <Window>
        <TitleBar>
          <TitleLeft>
            <ExcelLogo />
            <TitleItem $ml={10}>AutoSave</TitleItem>
            <Toggle>Off</Toggle>
            <TitleItem $ml={7}><Save size={13} strokeWidth={1.4} /></TitleItem>
            <TitleItem $ml={8}><Undo2 size={12} strokeWidth={1.5} /></TitleItem>
            <TitleItem $ml={3}><ChevronDown size={8} /></TitleItem>
            <TitleItem $ml={5} $dim><Redo2 size={11} strokeWidth={1.5} /></TitleItem>
            <TitleItem $ml={3} $dim><ChevronDown size={8} /></TitleItem>
            <TitleItem $ml={9}><ExpandGlyph color="#fff" /></TitleItem>
            <FileName $ml={16}>Sales Data.xlsx<ChevronDown size={10} /></FileName>
          </TitleLeft>
          <SearchBox><Search size={12} strokeWidth={1.5} />Search</SearchBox>
          <TitleRight>
            <WindowButton><Lightbulb size={12} strokeWidth={1.4} /></WindowButton>
            <WindowButton><Minus size={12} strokeWidth={1.4} /></WindowButton>
            <WindowButton><Square size={10} strokeWidth={1.5} /></WindowButton>
            <WindowButton><X size={13} strokeWidth={1.4} /></WindowButton>
          </TitleRight>
        </TitleBar>
        <TabRow>
          <Tab>File</Tab>
          <Tab>Home</Tab>
          <Tab>Insert</Tab>
          <Tab>Page Layout</Tab>
          <Tab>Formulas</Tab>
          <Tab>Data</Tab>
          <Tab>Review</Tab>
          <Tab>View</Tab>
          <Tab>Help</Tab>
          <Tab>Acrobat</Tab>
          <Tab $green>Chart Design</Tab>
          <Tab $active>Format</Tab>
          <TabActions>
            <CommentsButton><MessageSquare size={10} strokeWidth={1.3} />Comments</CommentsButton>
            <ShareButton><Share size={10} strokeWidth={1.3} />Share<ChevronDown size={8} /></ShareButton>
          </TabActions>
        </TabRow>
        <RibbonBar />
        <FormulaBar>
          <NameBox>Chart 4<ChevronDown size={9} /></NameBox>
          <FormulaDots><EllipsisVertical size={10} /></FormulaDots>
          <FormulaTools>
            <X size={11} strokeWidth={1.1} />
            <Check size={11} strokeWidth={1.1} />
            <FxLabel>fx</FxLabel>
            <ChevronDown size={9} />
          </FormulaTools>
          <FormulaInput><ChevronDown size={10} /></FormulaInput>
        </FormulaBar>
        <Body>
          <SheetColumn>
            <SheetArea>
              <Sheet />
              <VScroll>
                <VArrow />
                <VThumb />
                <VArrow $down />
              </VScroll>
            </SheetArea>
            <SheetTabs>
              <NavArrows>
                <ChevronLeft size={12} strokeWidth={1.3} />
                <ChevronRight size={12} strokeWidth={1.3} />
              </NavArrows>
              <SheetTab>Sheet1</SheetTab>
              <TabSeparator />
              <AddSheet><Plus size={12} /></AddSheet>
              <HScrollDots><EllipsisVertical size={10} /></HScrollDots>
              <ScrollTrack $w={327} $ml={8}>
                <ScrollArrow />
                <ScrollThumb $ml={18} $w={259} />
                <ScrollArrow $right />
              </ScrollTrack>
            </SheetTabs>
          </SheetColumn>
          <FormatPanel />
          <ChartElements />
        </Body>
        <StatusBar>
          Ready
          <StatusIcon $ml={13}><MacroIcon /></StatusIcon>
          <StatusIcon $ml={10}><AccessIcon /></StatusIcon>
          <AccessText>Accessibility: Investigate</AccessText>
          <StatusRight>
            <StatusStat>Average: 17258.33333</StatusStat>
            <StatusStat>Count: 26</StatusStat>
            <StatsEnd>Sum: 207100</StatsEnd>
            <ViewButton $on><NormalViewIcon /></ViewButton>
            <ViewButton><PageViewIcon /></ViewButton>
            <ViewButton><BreakViewIcon /></ViewButton>
            <ZoomBar>
              <Minus size={8} />
              <ZoomTrack />
              <Plus size={8} />
            </ZoomBar>
            <ZoomLabel>100%</ZoomLabel>
          </StatusRight>
        </StatusBar>
      </Window>
      <Watermark>SLIDEMODEL.COM</Watermark>
    </Page>
  )
}
